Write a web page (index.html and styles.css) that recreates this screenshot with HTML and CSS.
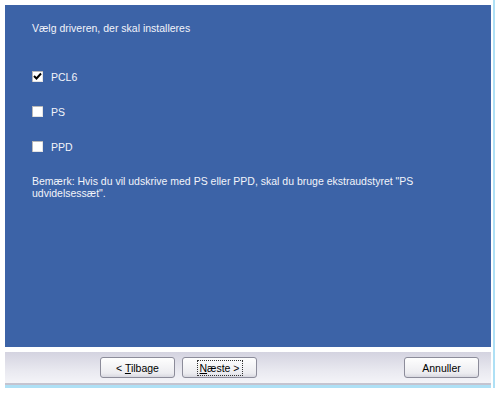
FILE: index.html
```html
<!DOCTYPE html>
<html>
<head>
<meta charset="utf-8">
<link rel="stylesheet" href="styles.css">
</head>
<body>
<div class="window">
  <div class="panel">
    <div class="title">Vælg driveren, der skal installeres</div>
    <div class="options">
      <label class="opt"><span class="box checked"><svg width="9" height="9" viewBox="0 0 9 9"><path d="M1 4 L3.5 6.5 L8 1.5" stroke="#000" stroke-width="2" fill="none"/></svg></span>PCL6</label>
      <label class="opt"><span class="box"></span>PS</label>
      <label class="opt"><span class="box"></span>PPD</label>
    </div>
    <div class="note">Bemærk: Hvis du vil udskrive med PS eller PPD, skal du bruge ekstraudstyret "PS udvidelsessæt".</div>
  </div>
  <div class="sep"></div>
  <div class="bar">
    <div class="nav">
      <button class="btn">&lt; <u>T</u>ilbage</button>
      <button class="btn focus"><span class="dots"><u>N</u>æste &gt;</span></button>
    </div>
    <button class="btn">Annuller</button>
  </div>
  <div class="bottom"></div>
</div>
</body>
</html>
```
FILE: styles.css
```css
html, body { margin: 0; padding: 0; background: #fff; }
body { width: 496px; height: 393px; overflow: hidden; font-family: "Liberation Sans", Arial, sans-serif; font-size: 10.5px; }
.window { padding: 5px 2px 0 5px; display: flex; flex-direction: column; height: 388px; border-right: 2px solid #aee0f5; box-sizing: border-box; width: 495px; }
.panel { background: #3c63a7; height: 345px; color: #f2f4fa; padding: 0 0 0 27px; box-sizing: border-box; }
.title { padding-top: 17px; height: 59px; box-sizing: border-box; }
.options { display: flex; flex-direction: column; gap: 21px; padding-top: 6px; }
.opt { display: flex; align-items: center; gap: 8px; height: 13px; }
.opt + .opt { margin-top: 1px; }
.box { width: 11px; height: 11px; background: #fff; box-shadow: inset 1px 1px 0 #b8b8b8, inset -1px -1px 0 #e4e4e4; display: flex; align-items: center; justify-content: center; }
.note { margin-top: 22px; width: 400px; line-height: 12px; }
.sep { height: 5px; background: #fff; }
.bar { height: 31px; background: linear-gradient(to bottom, #d4d3e0, #e9e9f0 60%, #f4f4f8); display: flex; align-items: center; justify-content: space-between; padding: 0 12px 0 95px; border-bottom: 2px solid #c4c4d0; }
.nav { display: flex; gap: 7px; }
.btn { width: 75px; height: 21px; border: 1px solid #8c8c9a; border-radius: 3px; background: linear-gradient(#fefefe, #ececf0 80%, #d8d8e0); font: 10.5px "Liberation Sans", Arial, sans-serif; color: #000; padding: 0; }
.dots { outline: 1px dotted #333; padding: 1px 2px; }
.bottom { height: 3px; background: #aee0f5; }
```
